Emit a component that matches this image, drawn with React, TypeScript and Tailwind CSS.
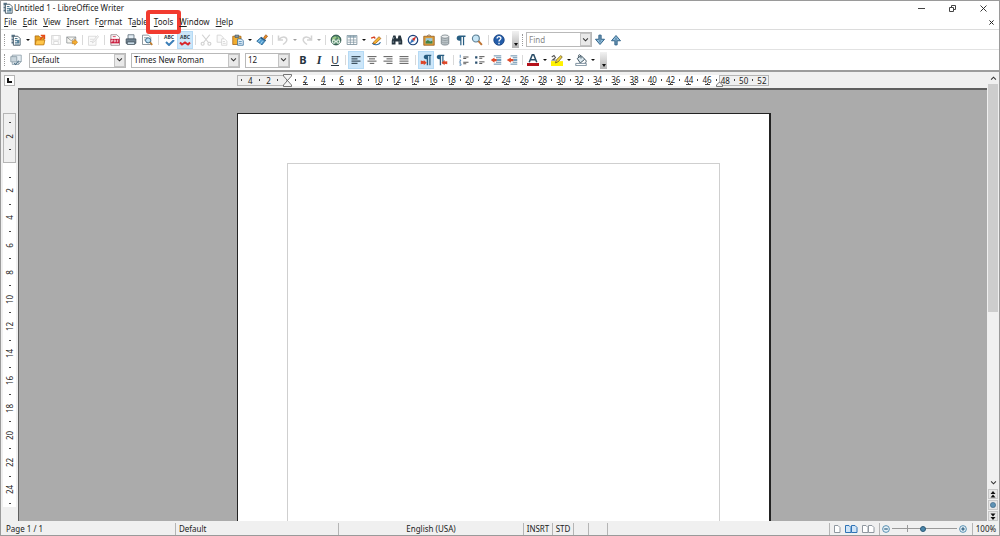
import type { ReactNode } from "react";

type IconProps = { children: ReactNode; faded?: boolean };

function Icon({ children, faded }: IconProps) {
  return (
    <svg viewBox="0 0 16 16" className={faded ? "size-3 opacity-25" : "size-3"} fill="none" aria-hidden="true">
      {children}
    </svg>
  );
}

const dark = "#3f5361";
const blue = "#2f6fa8";

const icons: Record<string, ReactNode> = {
  newDoc: (
    <>
      <path d="M2 1h4.500v3.500H2zM2 6h3v2.500H2zM2 10h3v2.500H2z" fill="#587487" />
      <path d="M4.500 3h6l3 3v9h-9z" fill="#fff" stroke={dark} strokeWidth="1.200" />
      <path d="M6.500 6h3.500M6.500 8.500h5.500M6.500 11h5.500M6.500 13.300h5.500" stroke="#48758f" strokeWidth="1.300" />
      <path d="M9.500 8h3v4h-3z" fill="#548199" />
    </>
  ),
  open: (
    <>
      <path d="M1.500 2.500h5l1.500 2h5V14h-11.500z" fill="#e8a523" stroke="#a8650c" />
      <path d="M3 8h11.500L13 14.500H1.500z" fill="#ffc64a" stroke="#b8730e" />
      <path d="M8 7.500l5-5m-4-.5h5v5" stroke="#e54b16" strokeWidth="1.800" />
    </>
  ),
  save: (
    <>
      <path d="M2 2h12v12H2z" fill="#e6e6e6" stroke="#555" />
      <path d="M4 2h8v6H4zM5 10h6v4H5z" fill="#fff" stroke="#555" />
    </>
  ),
  mail: (
    <>
      <path d="M1 4h12v8H1z" fill="#f5f5f0" stroke="#858b8f" />
      <path d="M1 4l6 5 6-5" stroke="#858b8f" />
      <path d="M8.500 9h3V7l4 4-4 4v-2h-3z" fill="#f6ae2f" stroke="#b36c12" strokeWidth=".7" />
    </>
  ),
  edit: (
    <>
      <path d="M2 3h10v12H2z" fill="#eee" stroke="#555" />
      <path d="M4 7h5M4 10h3M7 12l1-3 6-7 1.500 1.500-6 7z" stroke="#555" fill="#ddd" />
    </>
  ),
  pdf: (
    <>
      <path d="M2.500 1h8l3.500 3.500V15H2.500z" fill="#fff" stroke="#87747a" />
      <path d="M2 6.500h12v6H2z" fill="#c9193b" />
      <path d="M5 3.500h4" stroke="#c9193b" />
      <path d="M3.500 11V8h1.500v1.500H3.500M7 8v2.500h1.500V8zM11 11V8h1.500M11 9.500h1.500" stroke="#fff" strokeWidth=".8" />
    </>
  ),
  print: (
    <>
      <path d="M4 1h8v6H4z" fill="#e3edf4" stroke="#52626d" />
      <path d="M1.500 6.500h13v6h-13z" fill="#708391" stroke="#3d4b55" />
      <path d="M3 10.500h10V14H3z" fill="#c9dbe7" stroke="#3d4b55" />
    </>
  ),
  preview: (
    <>
      <path d="M2 1.500h8l3 3V14H2z" fill="#fff" stroke="#6c7880" />
      <path d="M4 5h5M4 8h3" stroke="#77848c" />
      <circle cx="9.500" cy="8.500" r="3.400" fill="#b9def2" stroke="#3b6886" strokeWidth="1.300" />
      <path d="M12 11l3 3.500" stroke="#c17d2c" strokeWidth="2.200" />
    </>
  ),
  cut: (
    <>
      <path d="M3 1l8 10M13 1L5 11" stroke="#444" strokeWidth="1.500" />
      <circle cx="3.500" cy="13" r="2" stroke="#444" strokeWidth="1.500" />
      <circle cx="12.500" cy="13" r="2" stroke="#444" strokeWidth="1.500" />
    </>
  ),
  copy: (
    <>
      <path d="M1.500 1.500h5l3 3V11h-8z" fill="#eee" stroke="#444" />
      <path d="M7.500 6.500h4l3 3V15h-7z" fill="#fff" stroke="#444" />
      <path d="M9 10h3M9 12.500h4" stroke="#444" />
    </>
  ),
  paste: (
    <>
      <path d="M1 3h11v11H1z" fill="#f0ad30" stroke="#a25c0e" />
      <path d="M4 1.500h5v3H4z" fill="#8a9aa5" stroke="#475965" />
      <path d="M7.500 6.500h5l2.500 2.500v6H7.500z" fill="#e4f1fa" stroke="#286496" />
      <path d="M9 10h4M9 12.500h4" stroke="#3e7bab" />
    </>
  ),
  brush: (
    <>
      <path d="M10 5l3-4 2.500 2-3.500 4z" fill="#e58b27" stroke="#924d12" strokeWidth=".8" />
      <path d="M6 5l6 4.500-4 5-7-5z" fill="#4f9bcf" stroke="#225d8b" />
      <path d="M3 11l3-4M6 13l3-4" stroke="#bee1f5" />
      <path d="M6.500 4.500L13 9" stroke="#22567f" strokeWidth="1.800" />
    </>
  ),
  undo: <path d="M2 2v6h6M3 7c3-4 9-4 10 0 .7 3-2 5-5 7" stroke="#555" strokeWidth="2" />,
  redo: <path d="M14 2v6H8M13 7C10 3 4 3 3 7c-.7 3 2 5 5 7" stroke="#555" strokeWidth="2" />,
  globe: (
    <>
      <circle cx="8" cy="8" r="6.500" fill="#53886a" stroke="#234b42" strokeWidth="1.300" />
      <path d="M3 5l4-2 2 2-3 2-1 3-2-2zM10 3l3 3-2 1z" fill="#9dc987" />
      <path d="M3 10c0-3 4-3 4 0s-4 3-4 0zm6 0c0-3 4-3 4 0s-4 3-4 0zM6 10h4" stroke="#e1efe4" strokeWidth="1.500" />
    </>
  ),
  table: (
    <>
      <path d="M1.500 2h13v12h-13z" fill="#fff" stroke="#6e8490" />
      <path d="M2 2h12v3H2z" fill="#9fb4c0" />
      <path d="M5.800 2v12M10.200 2v12M2 8h12M2 11h12" stroke="#8096a2" />
    </>
  ),
  draw: (
    <>
      <path d="M3 12c2 3.500 9 3 11-1" stroke="#27679d" strokeWidth="1.500" />
      <path d="M5 10.500l7-7 2.500 2.500-7 6.500-3.500.5z" fill="#f4b72f" stroke="#a45b16" />
      <path d="M1.500 5.500l4-1.500 1.500 2" stroke="#d74224" strokeWidth="1.800" />
    </>
  ),
  binoculars: (
    <>
      <path d="M3 2h3l1 4h2l1-4h3l2 7v5h-5v-4H6v4H1V9z" fill="#27353f" />
      <path d="M3 9v3M12 9v3M4 4l-1 3" stroke="#8da2ae" />
    </>
  ),
  compass: (
    <>
      <circle cx="8" cy="8" r="6.300" fill="#f5f9ff" stroke="#1b4179" strokeWidth="1.600" />
      <path d="M12.500 3L9.500 9.500l-3-3z" fill="#d32e26" />
      <path d="M3.500 13l3-6.500 3 3z" fill="#3573ba" />
    </>
  ),
  gallery: (
    <>
      <path d="M5 3l3-2 3 2" stroke="#785226" />
      <path d="M1 3h14v12H1z" fill="#dd9c38" stroke="#8d581c" />
      <path d="M3.500 5.500h9v7h-9z" fill="#9ac7dc" />
      <path d="M3.500 12.500V10l3-2 3 2 3-1v3.500z" fill="#458344" />
    </>
  ),
  database: (
    <>
      <path d="M3 3.500v9c0 3 10 3 10 0v-9" fill="#bac2c6" stroke="#6c777d" />
      <ellipse cx="8" cy="3.500" rx="5" ry="2.200" fill="#edf0f1" stroke="#6c777d" />
      <path d="M3 6.500c0 3 10 3 10 0M3 9.500c0 3 10 3 10 0" stroke="#8f999e" />
    </>
  ),
  pilcrow: <path d="M14 2H6C1 2 1 9 6 9h1v6h1.600V4h2v11h1.600V4H14z" fill="#285e82" />,
  zoom: (
    <>
      <circle cx="6.500" cy="6" r="4.600" fill="#c6e5f5" stroke="#5b7e94" strokeWidth="1.500" />
      <path d="M10 9.500l4.500 5" stroke="#bd7231" strokeWidth="2.600" />
    </>
  ),
  help: (
    <>
      <circle cx="8" cy="8" r="7" fill="#225ca9" stroke="#153d79" />
      <path d="M5.500 6c0-3.500 5.500-3 5 0-.3 1.800-2.500 1.700-2.500 4M8 11.500v2" stroke="#fff" strokeWidth="1.800" />
    </>
  ),
  down: (
    <>
      <path d="M6.500 1.500h3V7h4.500L8 14 2 7h4.500z" fill="#8dbbd9" stroke="#2f6187" strokeWidth="1.300" />
      <path d="M8 2v9" stroke="#355f80" />
    </>
  ),
  up: (
    <>
      <path d="M6.500 14.500h3V9h4.500L8 2 2 9h4.500z" fill="#8dbbd9" stroke="#2f6187" strokeWidth="1.300" />
      <path d="M8 5v9" stroke="#355f80" />
    </>
  ),
  styles: (
    <>
      <path d="M3 1.500h12V10l-3.500 4H3z" fill="#e5edf2" stroke="#8496a1" />
      <path d="M15 10h-3.500v4" stroke="#8496a1" />
      <path d="M1 3.500h8v7H1z" fill="#c9d5dc" stroke="#8496a1" />
      <path d="M5.500 12l2 2 4-5" stroke="#496c83" strokeWidth="1.400" />
    </>
  ),
  left: <path d="M2 3.500h12M2 6.500h8M2 9.500h12M2 12.500h8" stroke={dark} strokeWidth="1.500" />,
  center: <path d="M2 3.500h12M4 6.500h8M2 9.500h12M5 12.500h6" stroke="#555" strokeWidth="1.300" />,
  right: <path d="M2 3.500h12M6 6.500h8M2 9.500h12M6 12.500h8" stroke="#555" strokeWidth="1.300" />,
  justify: <path d="M2 3.500h12M2 6.500h12M2 9.500h12M2 12.500h12" stroke="#555" strokeWidth="1.300" />,
  ltr: (
    <>
      <path d="M15 1H8C4 1 4 7 8 7h1v8h1.800V2.800h1.600V15H14V2.800h1z" fill="#285e82" />
      <path d="M1 8.500l4 1V8l4 3.500L5 15v-2l-4 .500z" fill="#dd4527" />
    </>
  ),
  rtl: (
    <>
      <path d="M11 1H4C0 1 0 7 4 7h1v8h1.800V2.800h1.600V13H10V2.800h1z" fill="#285e82" />
      <path d="M15 9.500l-3.500.5V8l-4 3.500 4 3.500v-2l3.500.5z" fill="#dd4527" />
    </>
  ),
  numbered: (
    <>
      <path d="M3 1v4M2 8h2l-2 3h2M2 13h2v2H2" stroke={blue} />
      <path d="M7 4h7M7 6h4M7 11h7M7 13h4" stroke="#555" strokeWidth="1.300" />
    </>
  ),
  bullets: (
    <>
      <path d="M1.500 3h3v3h-3zM1.500 10h3v3h-3z" fill="#294f6e" />
      <path d="M7 3.500h7M7 5.700h4M7 10.500h7M7 12.700h4" stroke="#555" strokeWidth="1.300" />
    </>
  ),
  outdent: (
    <>
      <path d="M5 2.500h10M8 5h7M8 11h7M5 13.500h10" stroke="#5280a0" strokeWidth="1.200" />
      <path d="M1 8l5-3.500v2h3v3H6v2z" fill="#df4a2a" />
      <path d="M9 8h6" stroke="#2d6d9b" strokeWidth="1.800" />
    </>
  ),
  indent: (
    <>
      <path d="M6 2.500h9M9 5h6M9 11h6M6 13.500h9" stroke="#5280a0" strokeWidth="1.200" />
      <path d="M1 8l5.500-3.500v2H10v3H6.500v2z" fill="#df4a2a" />
      <path d="M10 8h5" stroke="#2d6d9b" strokeWidth="1.800" />
    </>
  ),
  fontColor: (
    <>
      <path d="M3 11L7 1h2l4 10M4.500 7.500h7" stroke="#294c66" strokeWidth="2" />
      <path d="M0 12h16v4H0z" fill="#b5121b" />
    </>
  ),
  highlight: (
    <>
      <path d="M0 9.500h16V16H0z" fill="#fff200" />
      <path d="M1 4l3-2 2 3-4 3h4" stroke="#555" strokeWidth="1.400" />
      <path d="M7 8l6-6 2 2-5 6-4 2z" fill="#f1d13a" stroke="#655a28" />
    </>
  ),
  fill: (
    <>
      <path d="M3 6l5-4 5 5-6 5z" fill="#dbe8ef" stroke={dark} strokeWidth="1.300" />
      <path d="M5 5c-2-6 4-5 3 1M13 7c3 2 2 5 0 5" stroke={dark} strokeWidth="1.300" />
      <path d="M1 12.500h14v3H1z" fill="#fff" stroke="#577083" />
    </>
  ),
};

function Tool({ name, label, active, faded }: { name: string; label: string; active?: boolean; faded?: boolean }) {
  return (
    <button
      type="button"
      aria-label={label}
      disabled={faded}
      className={
        active
          ? "flex h-[18px] w-4 shrink-0 items-center justify-center border border-[#b5daf5] bg-[#cce6f9]"
          : "flex h-[18px] w-4 shrink-0 items-center justify-center"
      }
    >
      <Icon faded={faded}>{icons[name]}</Icon>
    </button>
  );
}

function SpellTool({ auto }: { auto?: boolean }) {
  return (
    <button
      type="button"
      aria-label={auto ? "Automatic spelling" : "Spelling"}
      className={
        auto
          ? "flex h-[18px] w-4 shrink-0 flex-col items-center justify-center border border-[#b5daf5] bg-[#cce6f9]"
          : "flex h-[18px] w-4 shrink-0 flex-col items-center justify-center"
      }
    >
      <span className="text-[5px] leading-[6px] font-bold text-[#2d3b46]">ABC</span>
      <svg viewBox="0 0 12 6" className="h-[6px] w-3" fill="none" aria-hidden="true">
        {auto ? (
          <path d="M1 2.500l2 2 3-2 3 2 2-2" stroke="#d8262c" strokeWidth="2" />
        ) : (
          <path d="M3 2l3 3 5-5" stroke="#3c7fb8" strokeWidth="2" />
        )}
      </svg>
    </button>
  );
}

function More({ label, faded }: { label: string; faded?: boolean }) {
  return (
    <button type="button" aria-label={label} className="flex h-4 w-2 shrink-0 items-center justify-center">
      <svg viewBox="0 0 4 2" className={faded ? "h-[2px] w-1 opacity-40" : "h-[2px] w-1"} aria-hidden="true">
        <path d="M0 0h4L2 2z" fill="#111" />
      </svg>
    </button>
  );
}

function Sep({ wide }: { wide?: boolean }) {
  return (
    <span className={wide ? "flex w-[6px] shrink-0 justify-center" : "flex w-[5px] shrink-0 justify-center"}>
      <span className="h-[10px] w-px bg-[#d9d9d9]" />
    </span>
  );
}

function Grip() {
  return (
    <span className="flex w-[7px] shrink-0 justify-center">
      <span className="h-3 border-l border-dotted border-[#999]" />
    </span>
  );
}

function Overflow() {
  return (
    <button
      type="button"
      aria-label="More toolbar options"
      className="flex h-[17px] w-[7px] shrink-0 items-end justify-center bg-linear-to-b from-[#f2f2f2] to-[#b5b5b5] pb-[2px]"
    >
      <svg viewBox="0 0 4 3" className="h-[3px] w-1" aria-hidden="true">
        <path d="M0 0h4L2 3z" fill="#111" />
      </svg>
    </button>
  );
}

function Chevron() {
  return (
    <svg viewBox="0 0 8 5" className="h-1 w-[7px]" fill="none" aria-hidden="true">
      <path d="M1 .5l3 3 3-3" stroke="#333" strokeWidth="1.300" />
    </svg>
  );
}

function Picker({ label, value, className }: { label: string; value: string; className: string }) {
  return (
    <span className={`relative flex h-[15px] shrink-0 border border-[#b9b9b9] bg-white ${className}`}>
      <select aria-label={label} className="w-full appearance-none bg-transparent pl-[2px] text-[8px] leading-3 outline-none">
        <option>{value}</option>
      </select>
      <span className="pointer-events-none absolute inset-y-0 right-0 flex w-[11px] items-center justify-center border border-[#c4c4c4] bg-[#e9e9e9]">
        <Chevron />
      </span>
    </span>
  );
}

const menus = ["File", "Edit", "View", "Insert", "Format", "Table", "Tools", "Window", "Help"];
const hotkeys: Record<string, number> = { Format: 1, Table: 1 };

function Menu({ name }: { name: string }) {
  const k = hotkeys[name] ?? 0;
  return (
    <button type="button" className="relative leading-3">
      {name.slice(0, k)}
      <span className="underline">{name[k]}</span>
      {name.slice(k + 1)}
      {name === "Tools" && (
        <span className="absolute -inset-x-2 -top-[6px] -bottom-[6px] rounded-[3px] border-4 border-[#f23b2f]" />
      )}
    </button>
  );
}

const horizontalMarks = Array.from({ length: 58 }, (_, i) => i - 5);
const verticalMarks = Array.from({ length: 29 }, (_, i) => i - 3);

function HorizontalRuler() {
  return (
    <div className="relative mx-auto flex h-[11px] w-[532px]">
      <div className="w-[50px] border border-[#b5b5b5]" />
      <div className="flex-1 bg-white" />
      <div className="w-[50px] border border-[#b5b5b5]" />
      <div className="absolute inset-y-0 right-[2px] left-0 grid grid-cols-[repeat(58,minmax(0,1fr))]">
        {horizontalMarks.map((n) => (
          <span key={n} className="flex flex-col items-center justify-center">
            {n === 0 ? null : n % 2 !== 0 ? (
              <span className="h-[2px] w-px bg-[#444]" />
            ) : (
              <>
                <span className="text-[8px] leading-[9px]">{Math.abs(n)}</span>
                {n > 0 && n < 47 && (
                  <svg viewBox="0 0 5 2" className="-mt-px h-[2px] w-[5px]" aria-hidden="true">
                    <path d="M2 0h1v1h2v1H0V1h2z" fill="#444" />
                  </svg>
                )}
              </>
            )}
          </span>
        ))}
      </div>
      <svg viewBox="0 0 9 13" className="absolute -top-px left-[46px] h-[13px] w-[9px]" fill="#f5f5f5" aria-hidden="true">
        <path d="M.5 .5h8v1.500L4.500 6.500.5 2zM.5 12.500h8V11L4.500 6.500.5 11z" stroke="#555" strokeWidth=".8" />
      </svg>
      <svg viewBox="0 0 7 6" className="absolute right-[46px] -bottom-px h-[6px] w-[7px]" fill="#f5f5f5" aria-hidden="true">
        <path d="M.5 5.500h6V4l-3-3-3 3z" stroke="#555" strokeWidth=".8" />
      </svg>
    </div>
  );
}

function VerticalRuler() {
  return (
    <div className="w-[17px] shrink-0 bg-[#f0f0f0] px-[2px] pt-[25px]">
      <div className="relative h-[394px]">
        <div className="h-[50px] border border-[#b5b5b5]" />
        <div className="h-[344px] bg-white" />
        <div className="absolute inset-x-0 top-[3px] grid h-[394px] grid-rows-[repeat(29,minmax(0,1fr))]">
          {verticalMarks.map((n) => (
            <span key={n} className="flex items-center justify-center">
              {n === 0 ? null : n % 2 !== 0 ? (
                <span className="h-px w-[2px] bg-[#444]" />
              ) : (
                <span className="-rotate-90 text-[8px] leading-[9px]">{Math.abs(n)}</span>
              )}
            </span>
          ))}
        </div>
      </div>
    </div>
  );
}

function PagerButton({ label, children }: { label: string; children: ReactNode }) {
  return (
    <button
      type="button"
      aria-label={label}
      className="flex h-[10px] w-[10px] items-center justify-center border border-[#c8c8c8] bg-[#e6e6e6]"
    >
      {children}
    </button>
  );
}

function ScrollBar() {
  return (
    <div className="flex w-3 shrink-0 flex-col items-center bg-[#f0f0f0]">
      <button type="button" aria-label="Scroll up" className="flex h-3 w-full shrink-0 items-center justify-center">
        <span className="rotate-180">
          <Chevron />
        </span>
      </button>
      <div className="w-full flex-1 px-px">
        <div className="h-[58%] bg-[#cdcdcd]" />
      </div>
      <button type="button" aria-label="Scroll down" className="flex h-3 w-full shrink-0 items-center justify-center">
        <Chevron />
      </button>
      <div className="flex flex-col gap-px">
        <PagerButton label="Previous page">
          <svg viewBox="0 0 6 7" className="h-[7px] w-[6px]" aria-hidden="true">
            <path d="M3 0l2.500 3h-5zM3 3.500L5.500 6.500h-5z" fill="#111" />
          </svg>
        </PagerButton>
        <PagerButton label="Navigation">
          <svg viewBox="0 0 6 6" className="size-[6px]" aria-hidden="true">
            <circle cx="3" cy="3" r="2.600" fill="#5f93b5" stroke="#35617f" strokeWidth=".6" />
          </svg>
        </PagerButton>
        <PagerButton label="Next page">
          <svg viewBox="0 0 6 7" className="h-[7px] w-[6px]" aria-hidden="true">
            <path d="M3 7L.5 4h5zM3 3.500L.5 .5h5z" fill="#111" />
          </svg>
        </PagerButton>
      </div>
    </div>
  );
}

function PageView({ label, double, active }: { label: string; double?: boolean; active?: boolean }) {
  const stroke = active ? "#2f73b5" : "#9098a0";
  const paint = active ? "#cfe4f7" : "#fff";
  return (
    <button type="button" aria-label={label} className="flex items-center">
      <svg viewBox={double ? "0 0 13 8" : "0 0 7 8"} className={double ? "h-2 w-[13px]" : "h-2 w-[7px]"} aria-hidden="true">
        <path d="M.5 .5h3.500l2 2v5H.5z" fill={paint} stroke={stroke} />
        {double && <path d="M6.500 .5H10l2 2v5H6.500z" fill={paint} stroke={stroke} />}
      </svg>
    </button>
  );
}

function ZoomButton({ plus }: { plus?: boolean }) {
  return (
    <button type="button" aria-label={plus ? "Zoom in" : "Zoom out"}>
      <svg viewBox="0 0 9 9" className="size-2" fill="none" aria-hidden="true">
        <circle cx="4.500" cy="4.500" r="3.800" fill="#e6f1f8" stroke="#4884a8" />
        <path d={plus ? "M2.500 4.500h4M4.500 2.500v4" : "M2.500 4.500h4"} stroke="#215679" strokeWidth="1.300" />
      </svg>
    </button>
  );
}

export default function App() {
  return (
    <div className="flex h-screen min-h-[420px] flex-col overflow-hidden border border-[#9a9a9a] bg-white font-['Noto_Sans','Open_Sans',sans-serif] text-[8px] text-[#222]">
      <header className="flex h-[14px] shrink-0 items-center pl-px">
        <Icon>{icons.newDoc}</Icon>
        <h1 className="flex-1 leading-3">Untitled 1 - LibreOffice Writer</h1>
        <div className="flex items-center gap-6 pr-3">
          <button type="button" aria-label="Minimize">
            <svg viewBox="0 0 7 7" className="size-[7px]" aria-hidden="true">
              <path d="M0 3h7v1H0z" fill="#444" />
            </svg>
          </button>
          <button type="button" aria-label="Restore">
            <svg viewBox="0 0 7 7" className="size-[7px]" fill="none" aria-hidden="true">
              <path d="M.5 2.500h4v4h-4zM2.500 2V.5h4v4H5" stroke="#444" />
            </svg>
          </button>
          <button type="button" aria-label="Close">
            <svg viewBox="0 0 7 7" className="size-[7px]" fill="none" aria-hidden="true">
              <path d="M.5 .5l6 6M6.500 .5l-6 6" stroke="#222" strokeWidth=".9" />
            </svg>
          </button>
        </div>
      </header>

      <nav className="flex h-[15px] shrink-0 items-center border-b border-[#dcdcdc] pr-[5px] pl-[3px]">
        <div className="z-10 flex flex-1 gap-[6px]">
          {menus.map((m) => (
            <Menu key={m} name={m} />
          ))}
        </div>
        <button type="button" aria-label="Close document">
          <svg viewBox="0 0 6 6" className="size-[5px]" fill="none" aria-hidden="true">
            <path d="M.5 .5l5 5M5.500 .5l-5 5" stroke="#222" strokeWidth="1.200" />
          </svg>
        </button>
      </nav>

      <div role="toolbar" aria-label="Standard" className="flex h-5 shrink-0 items-center border-b border-[#e2e2e2]">
        <Grip />
        <Tool name="newDoc" label="New" />
        <More label="New options" />
        <Tool name="open" label="Open" />
        <Tool name="save" label="Save" faded />
        <Tool name="mail" label="E-mail" />
        <Sep />
        <Tool name="edit" label="Edit file" faded />
        <Sep wide />
        <Tool name="pdf" label="Export as PDF" />
        <Tool name="print" label="Print" />
        <Tool name="preview" label="Page preview" />
        <Sep wide />
        <SpellTool />
        <SpellTool auto />
        <Sep />
        <Tool name="cut" label="Cut" faded />
        <Tool name="copy" label="Copy" faded />
        <Tool name="paste" label="Paste" />
        <More label="Paste options" />
        <Tool name="brush" label="Format paintbrush" />
        <Sep />
        <Tool name="undo" label="Undo" faded />
        <More label="Undo options" faded />
        <Tool name="redo" label="Redo" faded />
        <More label="Redo options" faded />
        <Sep />
        <Tool name="globe" label="Hyperlink" />
        <Tool name="table" label="Table" />
        <More label="Table options" />
        <Tool name="draw" label="Show draw functions" />
        <Sep />
        <Tool name="binoculars" label="Find and replace" />
        <Tool name="compass" label="Navigator" />
        <Tool name="gallery" label="Gallery" />
        <Tool name="database" label="Data sources" />
        <Tool name="pilcrow" label="Nonprinting characters" />
        <Tool name="zoom" label="Zoom" />
        <Sep wide />
        <Tool name="help" label="Help" />
        <span className="w-[5px] shrink-0" />
        <Overflow />
        <Grip />
        <span className="relative flex h-[15px] w-[66px] shrink-0 border border-[#b9b9b9]">
          <input aria-label="Find" placeholder="Find" className="w-full pl-[2px] text-[8px] leading-3 outline-none placeholder:text-[#888]" />
          <button
            type="button"
            aria-label="Search history"
            className="absolute inset-y-0 right-0 flex w-[11px] items-center justify-center border border-[#c4c4c4] bg-[#e9e9e9]"
          >
            <Chevron />
          </button>
        </span>
        <Tool name="down" label="Find next" />
        <Tool name="up" label="Find previous" />
      </div>

      <div role="toolbar" aria-label="Formatting" className="flex h-5 shrink-0 items-center">
        <Grip />
        <Tool name="styles" label="Styles and formatting" />
        <div className="flex gap-[5px] px-[5px]">
          <Picker label="Paragraph style" value="Default" className="w-[97px]" />
          <Picker label="Font name" value="Times New Roman" className="w-[109px]" />
          <Picker label="Font size" value="12" className="w-[45px]" />
        </div>
        <button type="button" aria-label="Bold" className="w-4 text-[11px] leading-4 font-bold text-[#26343f]">
          B
        </button>
        <button type="button" aria-label="Italic" className="w-4 font-['Liberation_Serif',serif] text-[12px] leading-4 font-bold text-[#26343f] italic">
          I
        </button>
        <button type="button" aria-label="Underline" className="w-4 text-[11px] leading-4 text-[#26343f] underline">
          U
        </button>
        <Sep />
        <Tool name="left" label="Align left" active />
        <Tool name="center" label="Center" />
        <Tool name="right" label="Align right" />
        <Tool name="justify" label="Justify" />
        <Sep wide />
        <Tool name="ltr" label="Left to right" active />
        <Tool name="rtl" label="Right to left" />
        <Sep wide />
        <Tool name="numbered" label="Numbering" />
        <Tool name="bullets" label="Bullets" />
        <Tool name="outdent" label="Decrease indent" />
        <Tool name="indent" label="Increase indent" />
        <Sep />
        <Tool name="fontColor" label="Font color" />
        <More label="Font color options" />
        <Tool name="highlight" label="Highlighting" />
        <More label="Highlighting options" />
        <Tool name="fill" label="Background color" />
        <More label="Background color options" />
        <span className="w-[3px] shrink-0" />
        <Overflow />
      </div>

      <main className="flex min-h-0 flex-1 border-t-2 border-[#9c9c9c]">
        <div className="flex min-w-0 flex-1 flex-col">
          <div className="flex h-4 shrink-0 items-center bg-[#f0f0f0]">
            <span className="flex w-[17px] shrink-0 justify-center">
              <button type="button" aria-label="Tab type" className="flex size-[11px] items-center justify-center border border-[#b5b5b5] bg-white">
                <svg viewBox="0 0 5 5" className="size-[5px]" aria-hidden="true">
                  <path d="M0 0h2v3h3v2H0z" fill="#111" />
                </svg>
              </button>
            </span>
            <div className="min-w-0 flex-1">
              <HorizontalRuler />
            </div>
          </div>
          <div className="flex min-h-0 flex-1">
            <VerticalRuler />
            <div className="min-w-0 flex-1 overflow-hidden border-t-2 border-l border-[#5f5f5f] bg-[#ababab] pt-[23px] pl-[2px]">
              <div className="mx-auto flex h-full w-[534px] flex-col border-t border-r-2 border-l border-[#222] bg-white px-[49px] pt-[49px]">
                <div
                  contentEditable
                  suppressContentEditableWarning
                  role="textbox"
                  aria-label="Document text"
                  className="flex-1 border-x border-t border-[#cfcfcf] outline-none"
                />
              </div>
            </div>
          </div>
        </div>
        <ScrollBar />
      </main>

      <footer className="flex h-[14px] shrink-0 items-center bg-[#f0f0f0] pt-px leading-3 whitespace-nowrap">
        <span className="w-[174px] pl-[5px]">Page 1 / 1</span>
        <span className="w-[163px] border-l border-[#b5b5b5] pl-[3px]">Default</span>
        <span className="w-[185px] border-l border-[#b5b5b5] text-center">English (USA)</span>
        <span className="w-[29px] border-l border-[#b5b5b5] text-center">INSRT</span>
        <span className="w-[21px] border-l border-[#b5b5b5] text-center">STD</span>
        <span className="h-3 w-[15px] border-l border-[#b5b5b5]" />
        <span className="h-3 w-[19px] border-l border-[#b5b5b5]" />
        <span className="h-3 flex-1 border-l border-[#b5b5b5]" />
        <span className="flex h-3 w-[50px] items-center gap-1 border-l border-[#b5b5b5] pl-1">
          <PageView label="Single page" />
          <PageView label="Multiple pages" double active />
          <PageView label="Book view" double />
        </span>
        <span className="flex h-3 w-[93px] items-center gap-[2px] border-l border-[#b5b5b5] pr-[5px] pl-[2px]">
          <ZoomButton />
          <input
            type="range"
            aria-label="Zoom"
            defaultValue={48}
            className="h-[7px] min-w-0 flex-1 appearance-none bg-[linear-gradient(#999,#999),linear-gradient(#999,#999)] bg-[length:100%_1px,1px_7px] bg-[position:center,24%_center] bg-no-repeat [&::-webkit-slider-thumb]:size-[6px] [&::-webkit-slider-thumb]:appearance-none [&::-webkit-slider-thumb]:rounded-full [&::-webkit-slider-thumb]:border [&::-webkit-slider-thumb]:border-[#2c5a78] [&::-webkit-slider-thumb]:bg-[#4a86aa]"
          />
          <ZoomButton plus />
        </span>
        <span className="w-[27px] border-l border-[#b5b5b5] text-center">100%</span>
      </footer>
    </div>
  );
}
